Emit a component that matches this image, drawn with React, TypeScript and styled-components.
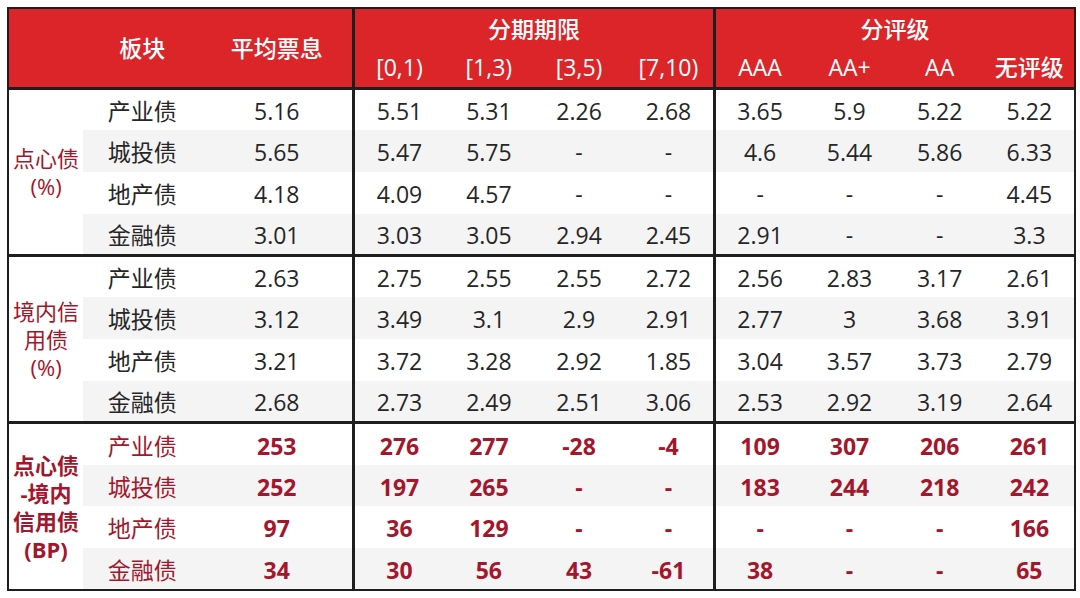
import React from "react";
import styled, { createGlobalStyle } from "styled-components";

const Global = createGlobalStyle`
  html, body { margin: 0; padding: 0; background: #ffffff; }
  body { font-family: "Open Sans", "Noto Sans CJK SC", sans-serif; }
`;

const Page = styled.div`
  width: 1080px;
  height: 598px;
  padding: 7px 0 0 7px;
  box-sizing: border-box;
  background: #fff;
`;

const Table = styled.table`
  width: 1069px;
  table-layout: fixed;
  border-collapse: collapse;
  border: 2px solid #1e1e1e;
  font-family: "Open Sans", "Noto Sans CJK SC", sans-serif;
  font-size: 23px;
  color: #262626;
`;

const Col = styled.col<{ $w: number }>`
  width: ${(p) => p.$w}px;
`;

const Head = styled.thead`
  background: #dc2529;
  color: #ffffff;
  border-bottom: 3px solid #1e1e1e;
`;

const HeadCell = styled.th<{ $h: number; $divider?: boolean; $top?: number }>`
  height: ${(p) => p.$h - (p.$top ?? 0)}px;
  padding: ${(p) => p.$top ?? 0}px 0 0;
  font-weight: 500;
  line-height: 30px;
  text-align: center;
  vertical-align: middle;
  white-space: nowrap;
  ${(p) => (p.$divider ? "border-left: 3px solid #1e1e1e;" : "")}
`;

const Section = styled.tbody`
  border-bottom: 3px solid #1e1e1e;
  &:last-child { border-bottom: none; }
`;

const Row = styled.tr<{ $shade: boolean }>`
  height: 41.8px;
  td.data { background: ${(p) => (p.$shade ? "#f4f4f4" : "#ffffff")}; }
`;

const GroupLabel = styled.td<{ $bold: boolean }>`
  background: #ffffff;
  color: #a3162b;
  font-weight: ${(p) => (p.$bold ? 700 : 400)};
  font-size: 22px;
  text-align: center;
  vertical-align: middle;
  padding: 0;
  white-space: nowrap;
`;

const LabelLine = styled.div`
  height: 28px;
  line-height: 28px;
`;

const Cell = styled.td<{ $accent: boolean; $bold: boolean; $divider?: boolean }>`
  padding: 2px 0 0;
  line-height: 30px;
  text-align: center;
  vertical-align: middle;
  white-space: nowrap;
  color: ${(p) => (p.$accent ? "#a3162b" : "#262626")};
  font-weight: ${(p) => (p.$bold ? 700 : 400)};
  ${(p) => (p.$divider ? "border-left: 3px solid #1e1e1e;" : "")}
`;

type Sec = {
  label: string[];
  accent: boolean;
  rows: { name: string; vals: string[] }[];
};

const sections: Sec[] = [
  {
    label: ["点心债", "(%)"],
    accent: false,
    rows: [
      { name: "产业债", vals: ["5.16", "5.51", "5.31", "2.26", "2.68", "3.65", "5.9", "5.22", "5.22"] },
      { name: "城投债", vals: ["5.65", "5.47", "5.75", "-", "-", "4.6", "5.44", "5.86", "6.33"] },
      { name: "地产债", vals: ["4.18", "4.09", "4.57", "-", "-", "-", "-", "-", "4.45"] },
      { name: "金融债", vals: ["3.01", "3.03", "3.05", "2.94", "2.45", "2.91", "-", "-", "3.3"] },
    ],
  },
  {
    label: ["境内信", "用债", "(%)"],
    accent: false,
    rows: [
      { name: "产业债", vals: ["2.63", "2.75", "2.55", "2.55", "2.72", "2.56", "2.83", "3.17", "2.61"] },
      { name: "城投债", vals: ["3.12", "3.49", "3.1", "2.9", "2.91", "2.77", "3", "3.68", "3.91"] },
      { name: "地产债", vals: ["3.21", "3.72", "3.28", "2.92", "1.85", "3.04", "3.57", "3.73", "2.79"] },
      { name: "金融债", vals: ["2.68", "2.73", "2.49", "2.51", "3.06", "2.53", "2.92", "3.19", "2.64"] },
    ],
  },
  {
    label: ["点心债", "-境内", "信用债", "(BP)"],
    accent: true,
    rows: [
      { name: "产业债", vals: ["253", "276", "277", "-28", "-4", "109", "307", "206", "261"] },
      { name: "城投债", vals: ["252", "197", "265", "-", "-", "183", "244", "218", "242"] },
      { name: "地产债", vals: ["97", "36", "129", "-", "-", "-", "-", "-", "166"] },
      { name: "金融债", vals: ["34", "30", "56", "43", "-61", "38", "-", "-", "65"] },
    ],
  },
];

const colWidths = [75, 118, 152, 90, 90, 90, 90, 90, 90, 90, 90];
const terms = ["[0,1)", "[1,3)", "[3,5)", "[7,10)"];
const ratings = ["AAA", "AA+", "AA", "无评级"];

export default function App() {
  return (
    <Page>
      <Global />
      <Table>
        <colgroup>
          {colWidths.map((w, i) => (
            <Col key={i} $w={w} />
          ))}
        </colgroup>
        <Head>
          <tr>
            <HeadCell $h={37} rowSpan={2} />
            <HeadCell $h={37} rowSpan={2}>板块</HeadCell>
            <HeadCell $h={37} rowSpan={2}>平均票息</HeadCell>
            <HeadCell $h={37} colSpan={4} $divider $top={2}>分期期限</HeadCell>
            <HeadCell $h={37} colSpan={4} $divider $top={2}>分评级</HeadCell>
          </tr>
          <tr>
            {terms.map((t, i) => (
              <HeadCell key={t} $h={41} $divider={i === 0}>{t}</HeadCell>
            ))}
            {ratings.map((t, i) => (
              <HeadCell key={t} $h={41} $divider={i === 0}>{t}</HeadCell>
            ))}
          </tr>
        </Head>
        {sections.map((s, si) => (
          <Section key={si}>
            {s.rows.map((r, ri) => (
              <Row key={r.name} $shade={ri % 2 === 1}>
                {ri === 0 && (
                  <GroupLabel rowSpan={4} $bold={s.accent}>
                    {s.label.map((l) => (
                      <LabelLine key={l}>{l}</LabelLine>
                    ))}
                  </GroupLabel>
                )}
                <Cell className="data" $accent={s.accent} $bold={false}>{r.name}</Cell>
                {r.vals.map((v, vi) => (
                  <Cell
                    key={vi}
                    className="data"
                    $accent={s.accent}
                    $bold={s.accent}
                    $divider={vi === 1 || vi === 5}
                  >
                    {v}
                  </Cell>
                ))}
              </Row>
            ))}
          </Section>
        ))}
      </Table>
    </Page>
  );
}
